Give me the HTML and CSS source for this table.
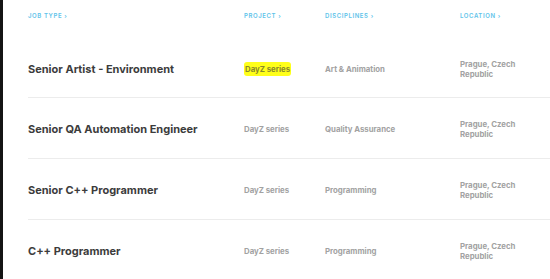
FILE: index.html
```html
<!DOCTYPE html>
<html>
<head>
<meta charset="utf-8">
<link rel="stylesheet" href="styles.css">
</head>
<body>
<div class="page">
  <div class="list">
    <div class="head">
      <span class="hcell">Job type ›</span>
      <span class="hcell">Project ›</span>
      <span class="hcell">Disciplines ›</span>
      <span class="hcell">Location ›</span>
    </div>
    <div class="row">
      <span class="title">Senior Artist - Environment</span>
      <span class="meta"><mark class="hl">DayZ series</mark></span>
      <span class="meta">Art &amp; Animation</span>
      <span class="meta loc">Prague, Czech Republic</span>
    </div>
    <div class="row">
      <span class="title">Senior QA Automation Engineer</span>
      <span class="meta">DayZ series</span>
      <span class="meta">Quality Assurance</span>
      <span class="meta loc">Prague, Czech Republic</span>
    </div>
    <div class="row">
      <span class="title">Senior C++ Programmer</span>
      <span class="meta">DayZ series</span>
      <span class="meta">Programming</span>
      <span class="meta loc">Prague, Czech Republic</span>
    </div>
    <div class="row last">
      <span class="title">C++ Programmer</span>
      <span class="meta">DayZ series</span>
      <span class="meta">Programming</span>
      <span class="meta loc">Prague, Czech Republic</span>
    </div>
  </div>
</div>
</body>
</html>
```

FILE: styles.css
```css
html, body {
  margin: 0;
  padding: 0;
  background: #ffffff;
  height: 100%;
}
body {
  font-family: Inter, "Noto Sans", sans-serif;
  overflow: hidden;
}
.page {
  border-left: 3px solid #141414;
  min-height: 100%;
  box-sizing: border-box;
  padding-left: 25px;
}
.list {
  display: flex;
  flex-direction: column;
}
.head, .row {
  display: grid;
  grid-template-columns: 216px 81px 135px 1fr;
  align-items: center;
}
.head {
  height: 30px;
}
.hcell {
  font-size: 6px;
  font-weight: 600;
  letter-spacing: 0.6px;
  text-transform: uppercase;
  color: #5ec3ea;
}
.row {
  height: 58px;
  padding-top: 2px;
  border-bottom: 1px solid #ececec;
}
.head + .row { margin-top: 8px; height: 57px; }
.row.last { border-bottom: none; }
.title {
  font-size: 11px;
  font-weight: 700;
  color: #3c3c3c;
}
.meta {
  font-size: 7.8px;
  font-weight: 700;
  color: #a2a2a2;
}
.loc {
  max-width: 62px;
  line-height: 10px;
}
.hl {
  background: #ffff1a;
  color: #8a8a2a;
  padding: 2px 1px;
  border-radius: 3px;
}
```
